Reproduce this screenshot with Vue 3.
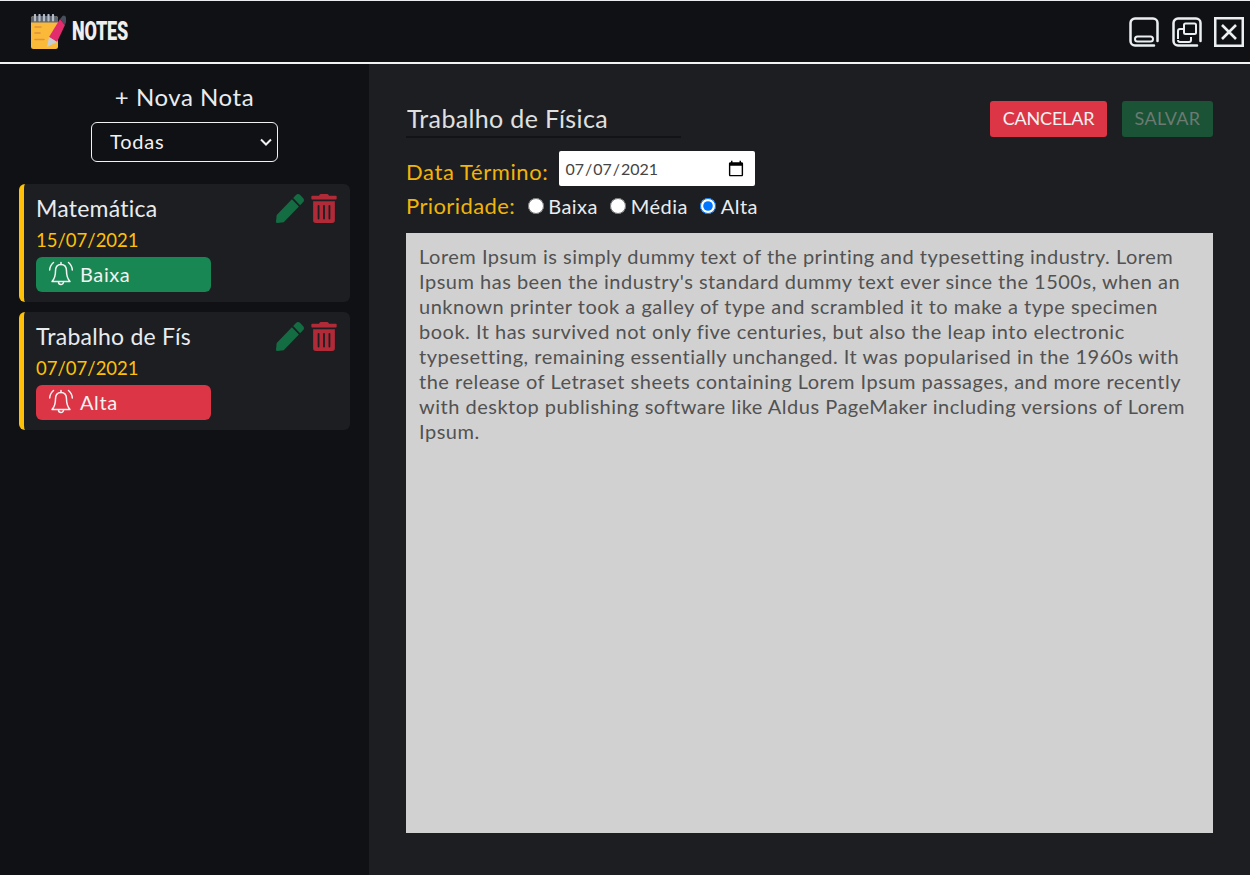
<template>
  <div class="app">
    <header class="topbar">
      <div class="brand">
        <svg class="logo" viewBox="0 0 36 36" width="36" height="36">
          <rect x="1" y="2" width="27" height="33" rx="2.500" fill="#fbb93a" />
          <path d="M1 4.500A2.500 2.500 0 0 1 3.500 2h22A2.500 2.500 0 0 1 28 4.500V8.500H1z" fill="#5d6672" />
          <path d="M5 1v5.500M9.500 1v5.500M14 1v5.500M18.500 1v5.500M23 1v5.500" stroke="#b4bcc8" stroke-width="2.200" stroke-linecap="round" />
          <path d="M5 13h6M5 19h5M5 25.500h9" stroke="#e0913a" stroke-width="1.600" stroke-linecap="round" />
          <path d="M19 23L30 5l5 6-8 17z" fill="#e32c6c" />
          <path d="M30 5l2.500-3a2.200 2.200 0 0 1 3.500 1.500V8l-1 3z" fill="#46505c" />
          <path d="M17 33l2-10 8 5z" fill="#c9ced6" />
        </svg>
        <span class="brand-name">NOTES</span>
      </div>
      <div class="window-btns">
        <svg viewBox="0 0 30 30" width="30" height="30" fill="none" stroke="#eceff1" stroke-width="2.500">
          <path d="M25 28.500H6a4.500 4.500 0 0 1-4.500-4.500V6A4.500 4.500 0 0 1 6 1.500h18A4.500 4.500 0 0 1 28.500 6v18" stroke-linecap="round" />
          <rect x="6" y="19.500" width="18" height="5" rx="2.500" stroke-width="2" />
        </svg>
        <svg viewBox="0 0 30 30" width="30" height="30" fill="none" stroke="#eceff1" stroke-width="2.500">
          <path d="M25 28.500H6a4.500 4.500 0 0 1-4.500-4.500V6A4.500 4.500 0 0 1 6 1.500h18A4.500 4.500 0 0 1 28.500 6v18" stroke-linecap="round" />
          <path d="M6 22v-8a2 2 0 0 1 2-2h3M19 20v3a2 2 0 0 1-2 2H8a2 2 0 0 1-2-2" stroke-width="2" />
          <rect x="12" y="6.500" width="12" height="10.500" rx="1.500" stroke-width="2" />
        </svg>
        <svg viewBox="0 0 30 30" width="30" height="30" fill="none" stroke="#eceff1">
          <rect x="1.250" y="1.250" width="27.500" height="27.500" stroke-width="2.500" />
          <path d="M8 8l14 14M22 8L8 22" stroke-width="2.600" />
        </svg>
      </div>
    </header>

    <div class="content">
      <aside class="sidebar">
        <div class="new-note">+ Nova Nota</div>
        <select class="filter">
          <option>Todas</option>
          <option>Baixa</option>
          <option>Média</option>
          <option>Alta</option>
        </select>

        <div v-for="note in notes" :key="note.title" class="note">
          <div class="note-top">
            <span class="note-title">{{ note.title }}</span>
            <div class="note-actions">
              <svg viewBox="0 0 512 512" width="28" height="29" preserveAspectRatio="none">
                <path fill="#146c43" d="M290.740 93.240l128.020 128.020-277.990 277.990-114.140 12.600C11.350 513.540-1.560 500.620.14 485.340l12.700-114.220 277.900-277.880zm207.200-19.060l-60.110-60.110c-18.750-18.750-49.160-18.750-67.910 0l-56.550 56.550 128.020 128.020 56.550-56.550c18.750-18.760 18.750-49.160 0-67.910z" />
              </svg>
              <svg viewBox="0 0 448 512" width="26" height="29">
                <path fill="#b02a37" d="M32 464a48 48 0 0 0 48 48h288a48 48 0 0 0 48-48V128H32zm272-256a16 16 0 0 1 32 0v224a16 16 0 0 1-32 0zm-96 0a16 16 0 0 1 32 0v224a16 16 0 0 1-32 0zm-96 0a16 16 0 0 1 32 0v224a16 16 0 0 1-32 0zM432 32H312l-9.400-18.700A24 24 0 0 0 281.100 0H166.800a23.700 23.700 0 0 0-21.400 13.300L136 32H16A16 16 0 0 0 0 48v32a16 16 0 0 0 16 16h416a16 16 0 0 0 16-16V48a16 16 0 0 0-16-16z" />
              </svg>
            </div>
          </div>
          <div class="note-date">{{ note.date }}</div>
          <div class="badge" :class="note.level">
            <svg viewBox="0 0 26 26" width="26" height="26" fill="none" stroke="#f2f2f2" stroke-width="1.500" stroke-linecap="round" stroke-linejoin="round">
              <path d="M13 3.500c-3.600 0-5.500 2.800-5.500 6.500 0 5.500-1.200 8-3.500 10.500h18c-2.300-2.500-3.500-5-3.500-10.500 0-3.700-1.900-6.500-5.500-6.500z" />
              <path d="M13 1.500v2M10.500 21a2.500 2.500 0 0 0 5 0" />
              <path d="M5.500 1.500C3.200 3.500 1.800 6 1.700 9M20.500 1.500c2.300 2 3.700 4.500 3.800 7.500" />
            </svg>
            <span>{{ note.priority }}</span>
          </div>
        </div>
      </aside>

      <main class="editor">
        <div class="editor-head">
          <input class="title-input" type="text" value="Trabalho de Física" />
          <div class="buttons">
            <button class="btn cancel">CANCELAR</button>
            <button class="btn save" disabled>SALVAR</button>
          </div>
        </div>
        <div class="row date-row">
          <label class="field-label">Data Término:</label>
          <input class="date-input" type="date" value="2021-07-07" />
        </div>
        <div class="row priority-row">
          <span class="field-label">Prioridade:</span>
          <label v-for="p in priorities" :key="p" class="radio">
            <input type="radio" name="priority" :value="p" :checked="p === 'Alta'" />{{ p }}
          </label>
        </div>
        <textarea class="body-input" v-model="body"></textarea>
      </main>
    </div>
  </div>
</template>

<script setup>
import { ref } from "vue";

const notes = [
  { title: "Matemática", date: "15/07/2021", priority: "Baixa", level: "low" },
  { title: "Trabalho de Fís", date: "07/07/2021", priority: "Alta", level: "high" }
];

const priorities = ["Baixa", "Média", "Alta"];

const body = ref(
  "Lorem Ipsum is simply dummy text of the printing and typesetting industry. Lorem Ipsum has been the industry's standard dummy text ever since the 1500s, when an unknown printer took a galley of type and scrambled it to make a type specimen book. It has survived not only five centuries, but also the leap into electronic typesetting, remaining essentially unchanged. It was popularised in the 1960s with the release of Letraset sheets containing Lorem Ipsum passages, and more recently with desktop publishing software like Aldus PageMaker including versions of Lorem Ipsum."
);
</script>

<style>
html, body { background: #1c1e22; overflow: hidden; }
</style>

<style scoped>
.app {
  height: 875px;
  display: flex;
  flex-direction: column;
  font-family: "Lato", "Noto Sans", sans-serif;
  color: #e9ecef;
}
.topbar {
  height: 64px;
  box-sizing: border-box;
  border-top: 1px solid #e9ecef;
  border-bottom: 2px solid #f2f2f2;
  background: #0f1115;
  display: flex;
  align-items: center;
  justify-content: space-between;
  padding: 0 6px 0 30px;
}
.brand { display: flex; align-items: center; gap: 6px; }
.logo { display: block; }
.brand-name {
  font-family: "Roboto", sans-serif;
  font-weight: 900;
  font-size: 25px;
  letter-spacing: -0.3px;
  color: #eeeeee;
  transform: scaleX(0.72);
  transform-origin: left center;
}
.window-btns { display: flex; gap: 12.500px; align-items: center; }
.content { flex: 1; display: flex; min-height: 0; }
.sidebar {
  width: 369px;
  box-sizing: border-box;
  background: #0f1115;
  padding: 17px 19px 0;
  display: flex;
  flex-direction: column;
  align-items: center;
}
.new-note { font-size: 24px; line-height: 32px; letter-spacing: 0.55px; color: #e9ecef; }
.filter {
  appearance: none;
  width: 187px;
  height: 40px;
  margin: 9px 0 22px;
  padding: 0 14px 2px 18px;
  background: #0f1115 url("data:image/svg+xml,%3Csvg xmlns='http://www.w3.org/2000/svg' width='12' height='8' viewBox='0 0 12 8'%3E%3Cpath d='M1 1.500l5 5 5-5' fill='none' stroke='%23f2f2f2' stroke-width='2'/%3E%3C/svg%3E") no-repeat right 5px center;
  color: #f2f2f2;
  border: 1px solid #f2f2f2;
  border-radius: 6px;
  font-family: inherit;
  font-size: 20px;
  letter-spacing: 0.8px;
}
.note {
  width: 100%;
  box-sizing: border-box;
  height: 118px;
  margin-bottom: 10px;
  padding: 8px 13px 0 12px;
  background: #1c1e22;
  border-left: 5px solid #ffc107;
  border-radius: 6px;
}
.note-top { display: flex; justify-content: space-between; align-items: flex-start; }
.note-title { font-size: 23px; line-height: 32px; letter-spacing: 0.25px; color: #e9ecef; }
.note-actions { display: flex; gap: 7px; margin-top: 2px; }
.note-date { font-size: 18.500px; line-height: 24px; margin-top: 4px; color: #ffc107; }
.badge {
  width: 175px;
  height: 35px;
  margin: 5px 0 0;
  padding-left: 12px;
  padding-bottom: 1px;
  box-sizing: border-box;
  display: flex;
  align-items: center;
  gap: 6px;
  border-radius: 6px;
  font-size: 20px;
  letter-spacing: 0.6px;
  color: #f2f2f2;
}
.low { background: #198754; }
.high { background: #dc3545; }
.editor {
  flex: 1;
  box-sizing: border-box;
  padding: 37px 37px 42px;
  display: flex;
  flex-direction: column;
  background: #1c1e22;
}
.editor-head { display: flex; justify-content: space-between; align-items: flex-start; }
.title-input {
  width: 275px;
  height: 37px;
  box-sizing: border-box;
  padding: 0 0 1px 1px;
  background: transparent;
  border: none;
  border-bottom: 2px solid #111317;
  outline: none;
  font-family: inherit;
  font-size: 25px;
  letter-spacing: 0.35px;
  color: #e0e0e0;
}
.buttons { display: flex; gap: 15px; }
.btn {
  height: 36px;
  padding: 0 0 2px;
  border: none;
  border-radius: 3px;
  font-family: inherit;
  font-size: 18px;
}
.cancel { width: 117px; letter-spacing: -0.2px; background: #dc3545; color: #f2f2f2; }
.save { width: 91px; letter-spacing: 0.3px; background: #1a5336; color: #6c7a72; }
.row { display: flex; align-items: center; }
.date-row { margin-top: 13px; height: 35px; }
.priority-row { margin-top: 5px; height: 29px; }
.field-label { font-size: 22px; letter-spacing: 0.4px; color: #f0b40a; }
.date-row .field-label { margin-top: 6px; letter-spacing: 0.6px; }
.date-input {
  width: 196px;
  height: 35px;
  margin-left: 11px;
  box-sizing: border-box;
  padding: 0 10px 0 5px;
  background: #fff;
  color: #444;
  border: none;
  border-radius: 2px;
  font-family: inherit;
  font-size: 16px;
}
.date-input::-webkit-calendar-picker-indicator {
  width: 18px;
  height: 18px;
  margin: 0;
  padding: 0;
}
.radio {
  display: flex;
  align-items: center;
  margin-left: 12.500px;
  font-size: 20px;
  letter-spacing: 0.45px;
  color: #e9ecef;
}
.radio input { width: 16px; height: 16px; margin: 0 4.500px 0 0; }
.body-input {
  flex: 1;
  margin-top: 13px;
  padding: 11px 13px;
  box-sizing: border-box;
  background: #d1d1d1;
  color: #525252;
  border: none;
  outline: none;
  resize: none;
  font-family: inherit;
  font-size: 20px;
  letter-spacing: 0.5px;
  line-height: 25px;
}
</style>
